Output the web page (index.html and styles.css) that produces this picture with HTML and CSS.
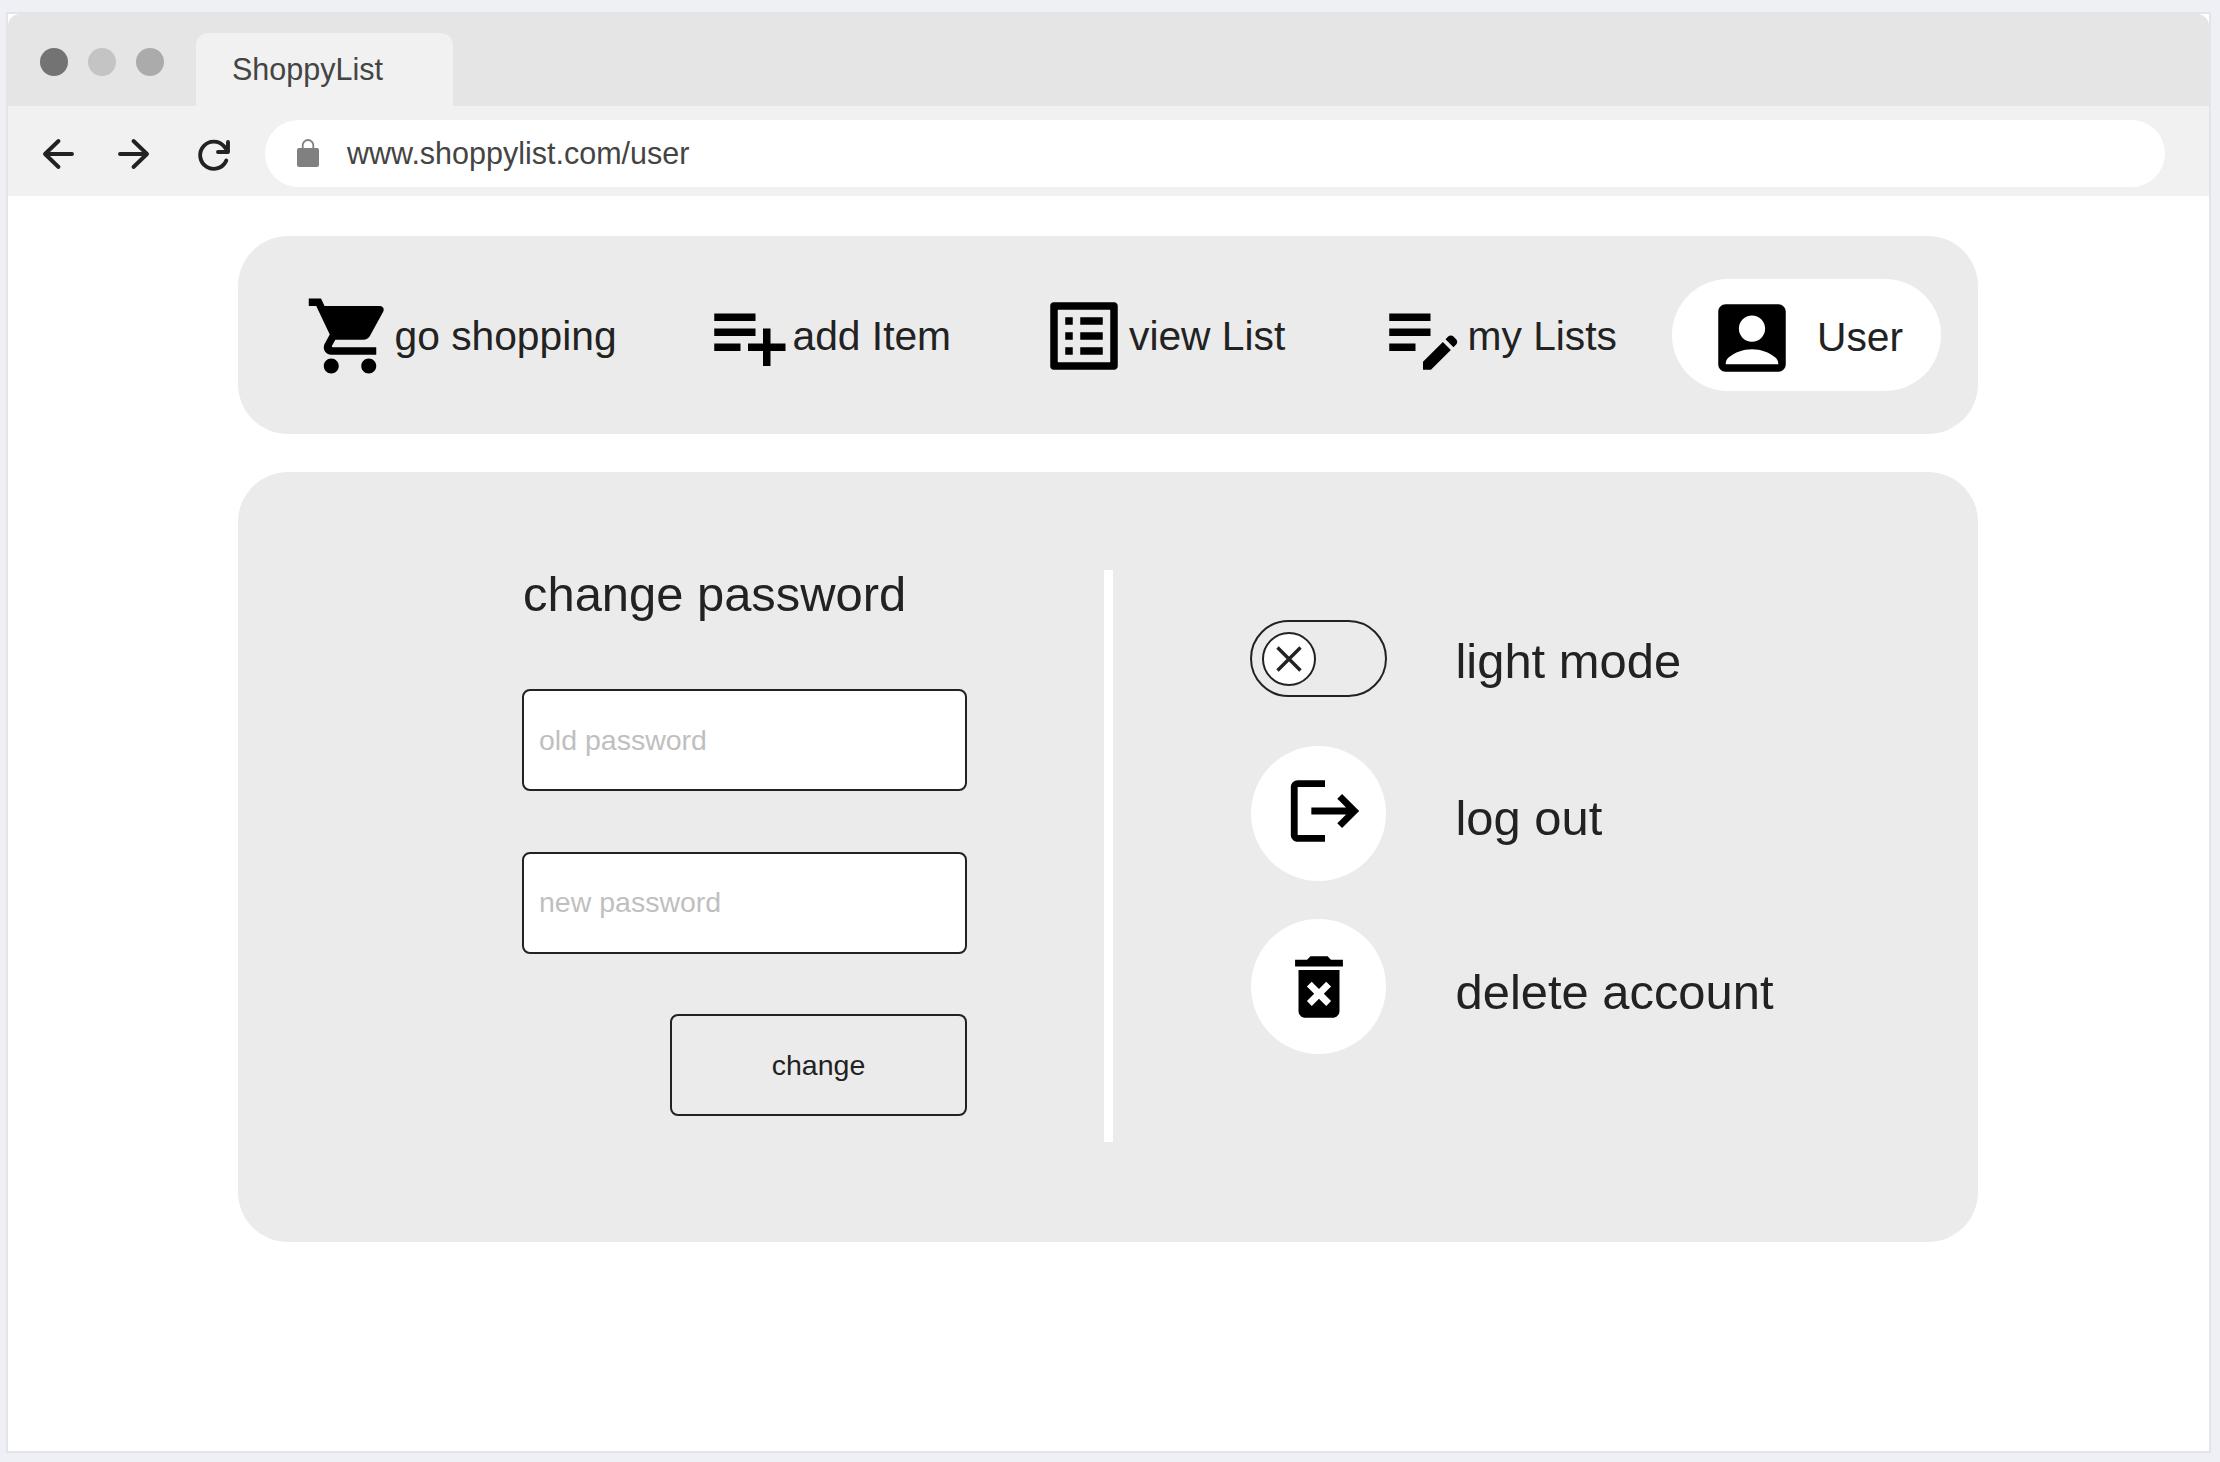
FILE: index.html
```html
<!DOCTYPE html>
<html lang="en">
<head>
<meta charset="utf-8">
<title>ShoppyList</title>
<link rel="stylesheet" href="styles.css">
</head>
<body>
<div class="window">
  <header class="chrome">
    <div class="tabs">
      <div class="lights">
        <span class="light light-dark"></span>
        <span class="light light-pale"></span>
        <span class="light light-mid"></span>
      </div>
      <div class="tab">ShoppyList</div>
    </div>
    <div class="toolbar">
      <svg class="tool" viewBox="0 0 36 36"><path d="M32 18H5M18.500 5L5 18l13.500 13"/></svg>
      <svg class="tool tool-forward" viewBox="0 0 36 36"><path d="M4 18h27M17.500 5L31 18 17.500 31"/></svg>
      <svg class="tool tool-reload" viewBox="0 0 36 36"><path d="M31.300 23.500A13.600 13.600 0 1 1 29 9.300L33 14.300M33 5v10H23"/></svg>
      <div class="address">
        <svg class="lock" viewBox="0 0 22 28"><rect y="9" width="22" height="19" rx="2" fill="#808080"/><path d="M5.700 10V6.300a5.300 5.300 0 0 1 10.600 0V10" fill="none" stroke="#808080" stroke-width="1.800"/></svg>
        <span>www.shoppylist.com/user</span>
      </div>
    </div>
  </header>
  <main class="page">
    <nav class="nav">
      <a class="nav-item"><svg class="nav-icon" viewBox="0 0 24 24"><path d="M7 18c-1.100 0-1.990.9-1.990 2S5.900 22 7 22s2-.9 2-2-.9-2-2-2zM1 2v2h2l3.600 7.590-1.350 2.450c-.16.28-.25.61-.25.96 0 1.100.9 2 2 2h12v-2H7.420c-.14 0-.25-.11-.25-.25l.03-.12.9-1.630h7.450c.75 0 1.410-.41 1.750-1.030l3.580-6.490A1.003 1.003 0 0 0 20 4H5.210l-.94-2H1zm16 16c-1.100 0-1.990.9-1.990 2s.89 2 1.990 2 2-.9 2-2-.9-2-2-2z"/></svg><span>go shopping</span></a>
      <a class="nav-item"><svg class="nav-icon" viewBox="0 0 24 24"><path d="M14 10H3v2h11v-2zm0-4H3v2h11V6zm4 8v-4h-2v4h-4v2h4v4h2v-4h4v-2h-4zM3 16h7v-2H3v2z"/></svg><span>add Item</span></a>
      <a class="nav-item"><svg class="nav-icon" viewBox="0 0 24 24"><path d="M19 5v14H5V5h14m1.100-2H3.900c-.5 0-.9.4-.9.9v16.200c0 .4.4.9.9.9h16.200c.4 0 .9-.5.9-.9V3.900c0-.5-.5-.9-.9-.9zM11 7h6v2h-6V7zm0 4h6v2h-6v-2zm0 4h6v2h-6zM7 7h2v2H7zm0 4h2v2H7zm0 4h2v2H7z"/></svg><span>view List</span></a>
      <a class="nav-item"><svg class="nav-icon" viewBox="0 0 24 24"><path d="M3 10h11v2H3v-2zm0-2h11V6H3v2zm0 8h7v-2H3v2zm15.010-3.130l.71-.71c.39-.39 1.020-.39 1.410 0l.71.71c.39.39.39 1.020 0 1.410l-.71.71-2.120-2.120zm-.71.71l-5.300 5.300V21h2.120l5.300-5.300-2.120-2.120z"/></svg><span>my Lists</span></a>
      <a class="nav-item nav-active"><svg class="nav-icon" viewBox="0 0 24 24"><path d="M19 3H5c-1.100 0-2 .9-2 2v14c0 1.100.9 2 2 2h14c1.100 0 2-.9 2-2V5c0-1.100-.9-2-2-2zm-7 3c1.930 0 3.500 1.570 3.500 3.500S13.930 13 12 13s-3.500-1.570-3.500-3.500S10.070 6 12 6zm7 13H5v-.23c0-.62.28-1.200.76-1.580C7.470 15.820 9.640 15 12 15s4.530.82 6.240 2.190c.48.38.76.97.76 1.580V19z"/></svg><span>User</span></a>
    </nav>
    <section class="panel">
      <form class="password">
        <h1 class="title">change password</h1>
        <input class="field" type="text" placeholder="old password">
        <input class="field" type="text" placeholder="new password">
        <button class="submit" type="button">change</button>
      </form>
      <div class="divider"></div>
      <div class="actions">
        <div class="action action-mode">
          <span class="toggle"><span class="knob"><svg class="cross" viewBox="0 0 26 26"><path d="M1.500 1.500l23 23M24.500 1.500l-23 23"/></svg></span></span>
          <span class="label">light mode</span>
        </div>
        <div class="action action-logout">
          <span class="round"><svg class="action-icon icon-logout" viewBox="0 0 24 24"><path d="M17 7l-1.410 1.410L18.170 11H8v2h10.170l-2.580 2.580L17 17l5-5zM4 5h8V3H4c-1.100 0-2 .9-2 2v14c0 1.100.9 2 2 2h8v-2H4V5z"/></svg></span>
          <span class="label">log out</span>
        </div>
        <div class="action">
          <span class="round"><svg class="action-icon" viewBox="0 0 24 24"><path d="M6 19c0 1.100.9 2 2 2h8c1.100 0 2-.9 2-2V7H6v12zm2.460-7.120l1.410-1.410L12 12.590l2.120-2.120 1.410 1.410L13.410 14l2.120 2.120-1.410 1.410L12 15.410l-2.120 2.120-1.410-1.410L10.590 14l-2.130-2.120zM15.500 4l-1-1h-5l-1 1H5v2h14V4z"/></svg></span>
          <span class="label">delete account</span>
        </div>
      </div>
    </section>
  </main>
</div>
</body>
</html>
```

FILE: styles.css
```css
* {
  box-sizing: border-box;
}

body {
  margin: 0;
  height: 1462px;
  padding: 12px 9px 9px 6px;
  background: #eff0f5;
  color: #222;
  font-family: "Liberation Sans", Arial, sans-serif;
  overflow: hidden;
}

svg {
  display: block;
  flex: none;
}

.window {
  height: 1441px;
  border: 2px solid #e3e4ea;
  background: #fff;
}

.chrome {
  height: 182px;
  border-radius: 12px 12px 0 0;
  background: #e5e5e5;
  color: #444;
  font-size: 30.5px;
  overflow: hidden;
}

.tabs {
  display: flex;
  height: 92px;
}

.lights {
  display: flex;
  gap: 20px;
  width: 188px;
  padding: 34px 0 0 32px;
}

.light {
  width: 28px;
  height: 28px;
  border-radius: 50%;
}

.light-dark { background: #737373; }
.light-pale { background: #c4c4c4; }
.light-mid { background: #ababab; }

.tab {
  width: 257px;
  height: 73px;
  margin-top: 19px;
  padding-left: 36px;
  border-radius: 12px 12px 0 0;
  background: #f1f1f1;
  line-height: 73px;
}

.toolbar {
  display: flex;
  align-items: center;
  height: 90px;
  padding: 5px 44px 0 32px;
  background: #f1f1f1;
}

.tool {
  width: 36px;
  height: 36px;
  margin: 1px 0 0 0;
  fill: none;
  stroke: #222;
  stroke-width: 3.9;
  stroke-linecap: round;
  stroke-linejoin: round;
}

.tool-forward { margin-left: 40px; }
.tool-reload { margin: 3px 0 0 43px; }

.address {
  display: flex;
  align-items: center;
  gap: 28px;
  flex: 1;
  height: 67px;
  margin-left: 34px;
  padding-left: 32px;
  border-radius: 34px;
  background: #fff;
  line-height: 67px;
}

.lock {
  width: 22px;
  height: 28px;
  margin-top: -2px;
}

.page {
  display: flex;
  flex-direction: column;
  gap: 38px;
  width: 1740px;
  margin: 40px 0 0 230px;
}

.nav {
  display: grid;
  grid-template-columns: 398px 336.5px 338.5px 294.5px 269px;
  align-items: center;
  height: 198px;
  padding-left: 66.5px;
  border-radius: 50px;
  background: #ebebeb;
  font-size: 40.75px;
  line-height: 47px;
}

.nav-item {
  display: flex;
  align-items: center;
  white-space: nowrap;
  padding-top: 2px;
}

.nav-icon {
  width: 90px;
  height: 90px;
}

.nav-active {
  gap: 20px;
  height: 112px;
  padding: 4px 0 0 35px;
  border-radius: 56px;
  background: #fff;
}

.nav-active .nav-icon {
  margin-top: 2px;
}

.panel {
  display: flex;
  height: 770px;
  padding-top: 98px;
  border-radius: 50px;
  background: #ebebeb;
}

.password {
  display: flex;
  flex-direction: column;
  width: 582px;
  margin-left: 284px;
}

.title {
  height: 56px;
  margin: -4px 0 67px 1px;
  font-size: 48.9px;
  font-weight: 400;
  line-height: 56px;
}

.field,
.submit {
  width: 445px;
  height: 102px;
  border: 2px solid #222;
  border-radius: 8px;
  color: #222;
  font: 28.5px "Liberation Sans", Arial, sans-serif;
}

.field {
  margin: 0 0 60.5px;
  padding: 0 15px;
  background: #fff;
}

.field::placeholder {
  color: #bfbfbf;
}

.submit {
  width: 297px;
  padding: 0;
  margin-left: 148px;
  background: transparent;
}

.divider {
  width: 9px;
  height: 572px;
  background: #fff;
}

.actions {
  width: 727px;
  padding: 50px 0 0 137px;
}

.action {
  display: flex;
  height: 135px;
}

.action-mode {
  height: 77px;
  margin-bottom: 49px;
}

.action-logout {
  margin-bottom: 38px;
}

.toggle {
  width: 137px;
  height: 77px;
  padding: 10px;
  border: 2px solid #222;
  border-radius: 39px;
}

.knob {
  display: grid;
  place-items: center;
  width: 54px;
  height: 54px;
  border: 2px solid #222;
  border-radius: 50%;
  background: #fff;
}

.cross {
  width: 26px;
  height: 26px;
  fill: none;
  stroke: #222;
  stroke-width: 3.4;
}

.round {
  display: grid;
  place-items: center;
  width: 135px;
  height: 135px;
  margin-left: 1px;
  border-radius: 50%;
  background: #fff;
}

.action-icon {
  width: 82px;
  height: 82px;
}

.icon-logout {
  margin: -5px 0 0 12px;
}

.label {
  margin: 13px 0 0 68.5px;
  font-size: 48.9px;
  line-height: 56px;
  white-space: nowrap;
}

.round + .label {
  margin: 45px 0 0 69.5px;
}

.action-logout .round + .label {
  margin-top: 44px;
}
```
